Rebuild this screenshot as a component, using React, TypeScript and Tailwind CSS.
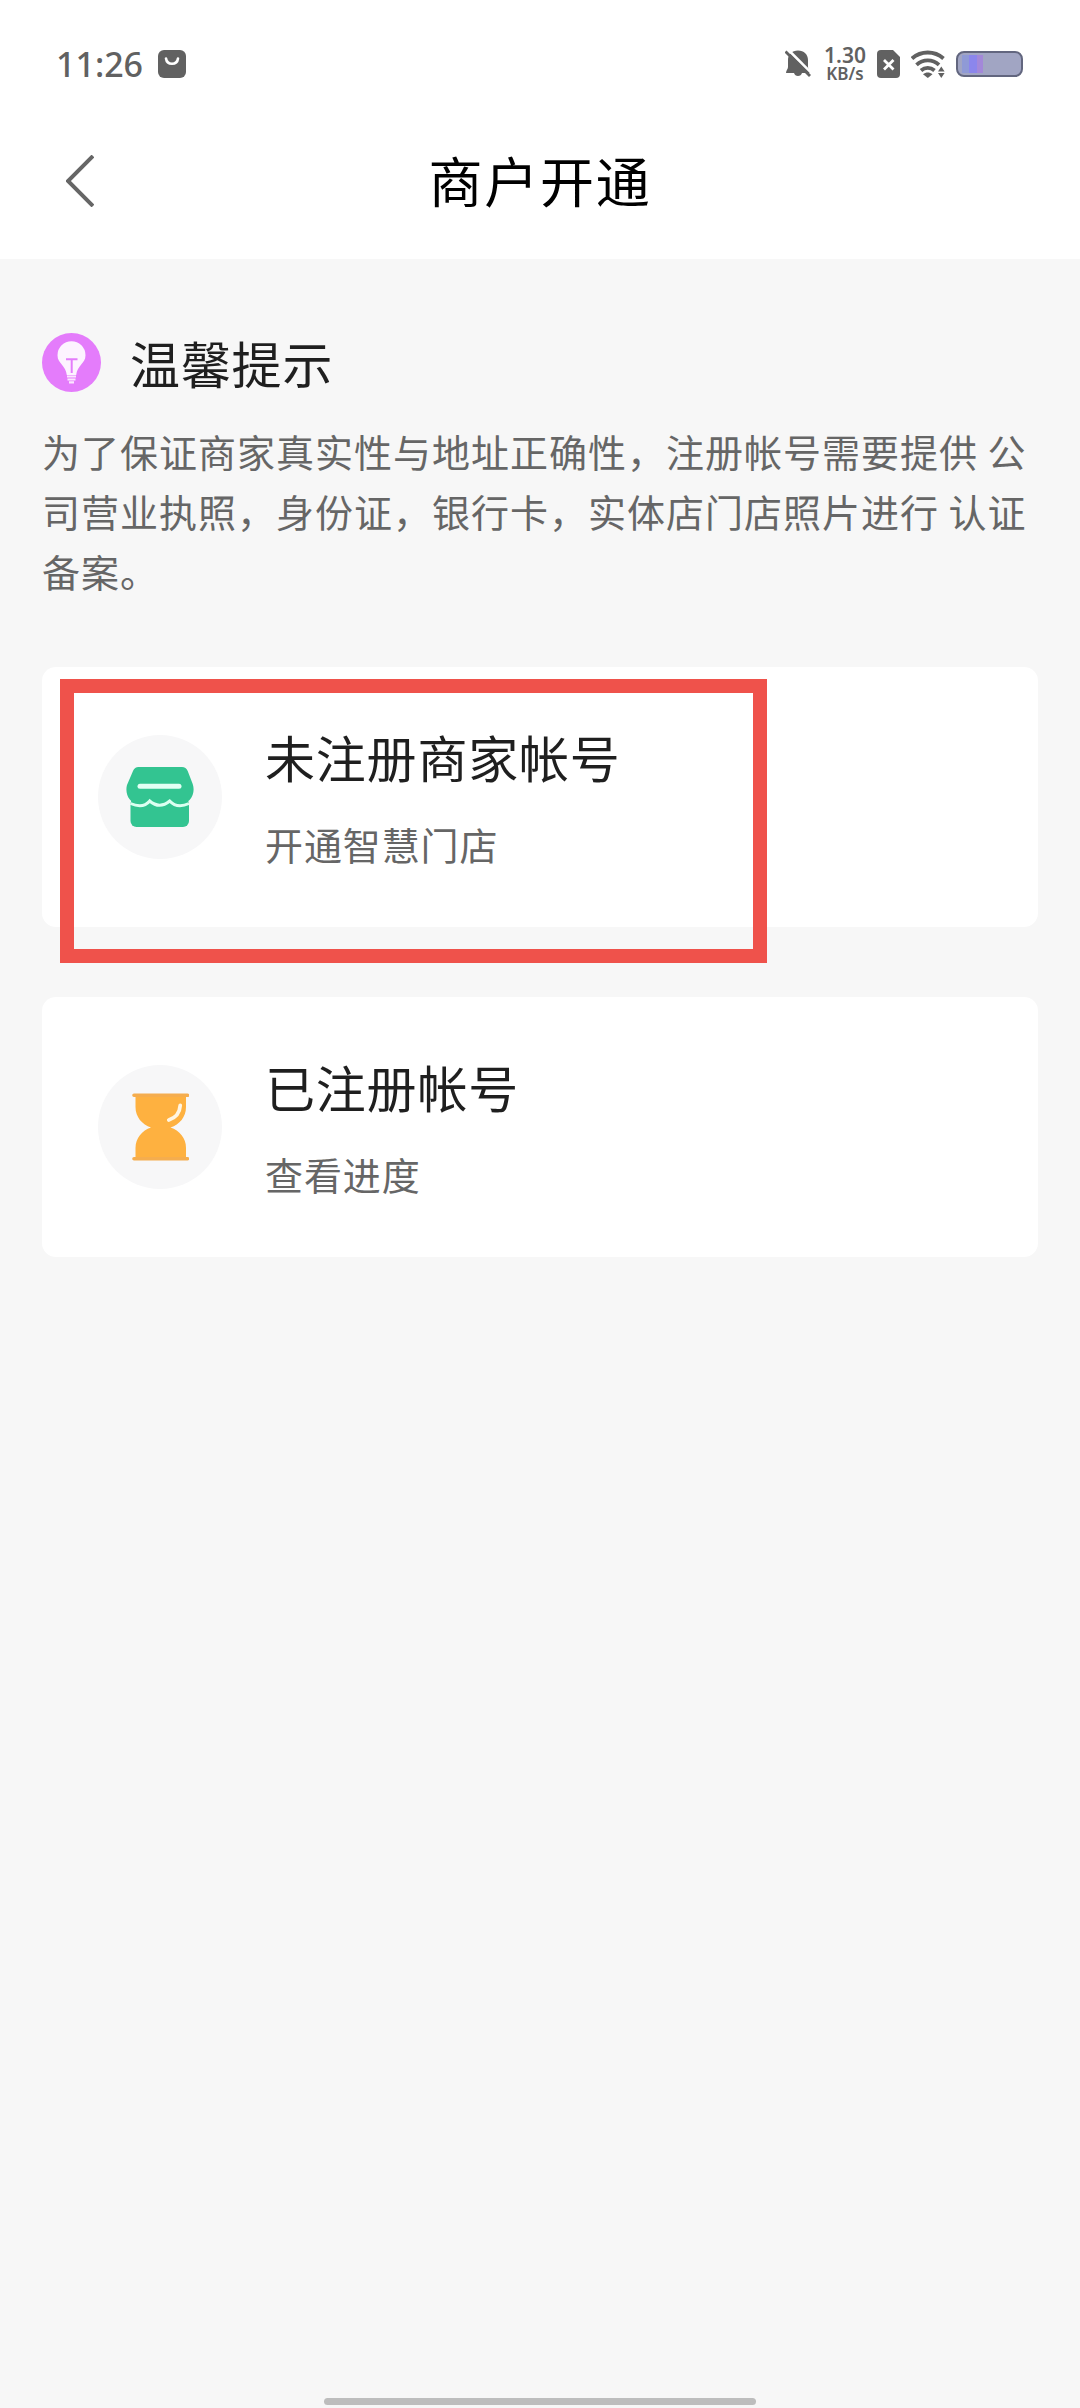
import React from 'react';

interface AccountCardProps {
  icon: React.ReactNode;
  title: string;
  description: string;
  highlighted?: boolean;
}

const StatusBar: React.FC = () => (
  <div className="flex h-[128px] items-start justify-between pl-14 pr-[57px] text-[#616161]">
    <div className="flex items-center pt-[39px]">
      <span className="w-[102px] font-['Noto_Sans'] text-[34px] font-medium leading-[50px]">11:26</span>
      <svg className="h-7 w-7" viewBox="0 0 28 28">
        <rect width="28" height="28" rx="6" fill="currentColor" />
        <path d="M8 8.500C9 15.500 19 15.500 20 8.500" fill="none" stroke="#fff" strokeWidth="2.600" strokeLinecap="round" />
      </svg>
    </div>

    <div className="mt-[39px] flex h-[50px] items-center">
      {/* Muted bell */}
      <svg className="h-7 w-[26px]" viewBox="0 0 26 28">
        <path
          d="M13 0.500C7 0.500 3 4.500 3 10v7c0 2-2 3.500-2 6h8a4.200 4.200 0 0 0 8 0h8C25 20.500 23 19 23 17v-7C23 4.500 19 .5 13 .5z"
          fill="currentColor"
        />
        <path d="M3 -0.500L27.500 24" stroke="#fff" strokeWidth="2.600" />
        <path d="M0.500 1.500L25 26" stroke="currentColor" strokeWidth="2.800" />
      </svg>

      <div className="ml-[11px] flex w-[46px] flex-col items-center font-['Noto_Sans'] font-semibold">
        <span className="text-[21px] leading-[20px]">1.30</span>
        <span className="text-[17px] leading-[18px]">KB/s</span>
      </div>

      {/* SIM card */}
      <svg className="ml-[9px] h-7 w-[23px]" viewBox="0 0 23 28">
        <path d="M4 0h12l7 7v17a4 4 0 0 1-4 4H4a4 4 0 0 1-4-4V4a4 4 0 0 1 4-4z" fill="currentColor" />
        <path d="M7 10l9.500 9.500M16.500 10L7 19.500" stroke="#fff" strokeWidth="2.800" />
      </svg>

      {/* Wi-Fi with traffic arrows */}
      <svg className="ml-[11px] h-[28px] w-[34px]" viewBox="0 0 34 28">
        <g fill="none" stroke="currentColor" strokeWidth="3.800">
          <path d="M1 8.500C10 0.500 23.500 0.500 32.500 8.500" />
          <path d="M5.500 14.800C12 8.800 21.500 8.800 28 14.800" />
          <path d="M10 20.500C14 17 19.500 17 23.500 20.500" />
        </g>
        <path d="M12 24.200c3-2.400 6.500-2.400 9.500 0L16.800 28z" fill="currentColor" />
        <path d="M27 21.500l3.300-5 3.300 5zM27 23l3.300 5 3.300-5z" fill="currentColor" />
      </svg>

      <div className="ml-[11px] flex h-[26px] w-[67px] overflow-hidden rounded-[8px] border-[2.5px] border-[#62667f] bg-[#a1a5c3] py-[2px] pl-1">
        <div className="w-[7px] bg-[#8f9ad6]" />
        <div className="w-2 bg-[#8b86ec]" />
        <div className="w-[6px] bg-[#a388d9]" />
      </div>
    </div>
  </div>
);

const BulbIcon: React.FC = () => (
  <svg className="h-[59px] w-[59px]" viewBox="0 0 59 59">
    <circle cx="29.500" cy="29.500" r="29.500" fill="#e47cfb" />
    <path
      d="M29.500 8.200a14 14 0 0 0-14 14c0 8.500 8.300 9.800 9.300 19.800h9.400c1-10 9.300-11.300 9.300-19.800A14 14 0 0 0 29.500 8.200z"
      fill="#fdf3ff"
    />
    <path d="M24 26.300h11.500M29.700 26.300V40" fill="none" stroke="#e47cfb" strokeWidth="2" />
    <path d="M25 43.500h9M25.500 46.500h8M27 49.300h5" stroke="#fbe6ff" strokeWidth="2.200" />
  </svg>
);

const ShopIcon: React.FC = () => (
  <svg className="h-[62px] w-[68px]" viewBox="0 0 68 62">
    <rect x="4.500" y="32" width="58.500" height="29" rx="6" fill="#33c491" />
    <path
      d="M12.500 1h43.500q4 0 5.700 4l5 13C70 28 64 38 54 38q-6 0-10.300-4.500Q40 38 34 38q-6 0-10.300-4.500Q19 38 13 38C4 38-1.500 28 1 19L7 5q1.700-4 5.500-4z"
      fill="#33c491"
    />
    <path
      d="M4.500 37.500Q17 43 23.700 35Q33.500 43.500 43.700 35Q51 43 63 37.500"
      fill="none"
      stroke="#dcfff1"
      strokeWidth="3"
    />
    <path d="M14 20.300h39" stroke="#e2fff4" strokeWidth="5" strokeLinecap="round" />
  </svg>
);

const HourglassIcon: React.FC = () => (
  <svg className="h-[68px] w-[57px]" viewBox="0 0 57 68">
    <path
      d="M3.500 2H54V14C54 24 47.500 31.500 38.500 34.500C47.500 37.500 54 45 54 55V66H3.500V55C3.500 45 10 37.500 19 34.500C10 31.500 3.500 24 3.500 14z"
      fill="#feb140"
    />
    <path d="M2 2.300h53.500M2 65.700h53.500" stroke="#f5ad4e" strokeWidth="3.600" strokeLinecap="round" />
    <path d="M48.200 12.500Q47.500 23.500 36.800 27" fill="none" stroke="#fff5e2" strokeWidth="3.800" strokeLinecap="round" />
  </svg>
);

const AccountCard: React.FC<AccountCardProps> = ({ icon, title, description, highlighted }) => (
  <div className="relative flex h-[260px] items-center rounded-[14px] bg-white pl-14">
    <div className="flex h-[124px] w-[124px] items-center justify-center rounded-full bg-[#f7f7f8]">{icon}</div>
    <div className="-mt-[2px] ml-[43px]">
      <h3 className="text-[50px] leading-[72px] tracking-[0.8px] text-[#1f1f1f]">{title}</h3>
      <p className="mt-6 text-[38px] leading-[56px] tracking-[0.9px] text-[#666]">{description}</p>
    </div>
    {highlighted && (
      <div className="absolute left-[18px] top-[12px] h-[284px] w-[707px] border-[14px] border-[#ef524b]" />
    )}
  </div>
);

export default function App() {
  const tips = [
    '为了保证商家真实性与地址正确性，注册帐号需要提供 公',
    '司营业执照，身份证，银行卡，实体店门店照片进行 认证',
    '备案。',
  ];

  return (
    <div
      lang="zh-CN"
      className="flex h-[2408px] w-[1080px] flex-col overflow-hidden bg-[#f7f7f7] font-['Noto_Sans_CJK_SC',sans-serif]"
    >
      {/* Header */}
      <header className="h-[259px] bg-white">
        <StatusBar />
        <div className="grid h-[105px] grid-cols-[1fr_auto_1fr] items-center pl-[66px] pr-[66px]">
          <svg className="h-[52px] w-[28px]" viewBox="0 0 28 52">
            <path d="M27 1L2 26L27 51" fill="none" stroke="#666" strokeWidth="4" />
          </svg>
          <h1 className="-mt-px text-[54px] leading-[80px] tracking-[1.7px] text-black">商户开通</h1>
        </div>
      </header>

      <main className="flex-1 px-[42px] pt-[66px]">
        <div className="flex h-[75px] items-center">
          <BulbIcon />
          <h2 className="-mt-[2px] ml-[29px] text-[50px] leading-[72px] tracking-[0.8px] text-[#1f1f1f]">温馨提示</h2>
        </div>

        <div className="mt-[21px] text-[38px] leading-[60px] tracking-[1px] text-[#666]">
          {tips.map((line) => (
            <p key={line} className="whitespace-nowrap">{line}</p>
          ))}
        </div>

        {/* Account options */}
        <div className="mt-[66px] flex flex-col gap-[70px]">
          <AccountCard icon={<ShopIcon />} title="未注册商家帐号" description="开通智慧门店" highlighted />
          <AccountCard icon={<HourglassIcon />} title="已注册帐号" description="查看进度" />
        </div>
      </main>

      <div className="mx-auto mb-[3px] h-[7px] w-[432px] rounded-full bg-[#bdbdbd]" />
    </div>
  );
}
